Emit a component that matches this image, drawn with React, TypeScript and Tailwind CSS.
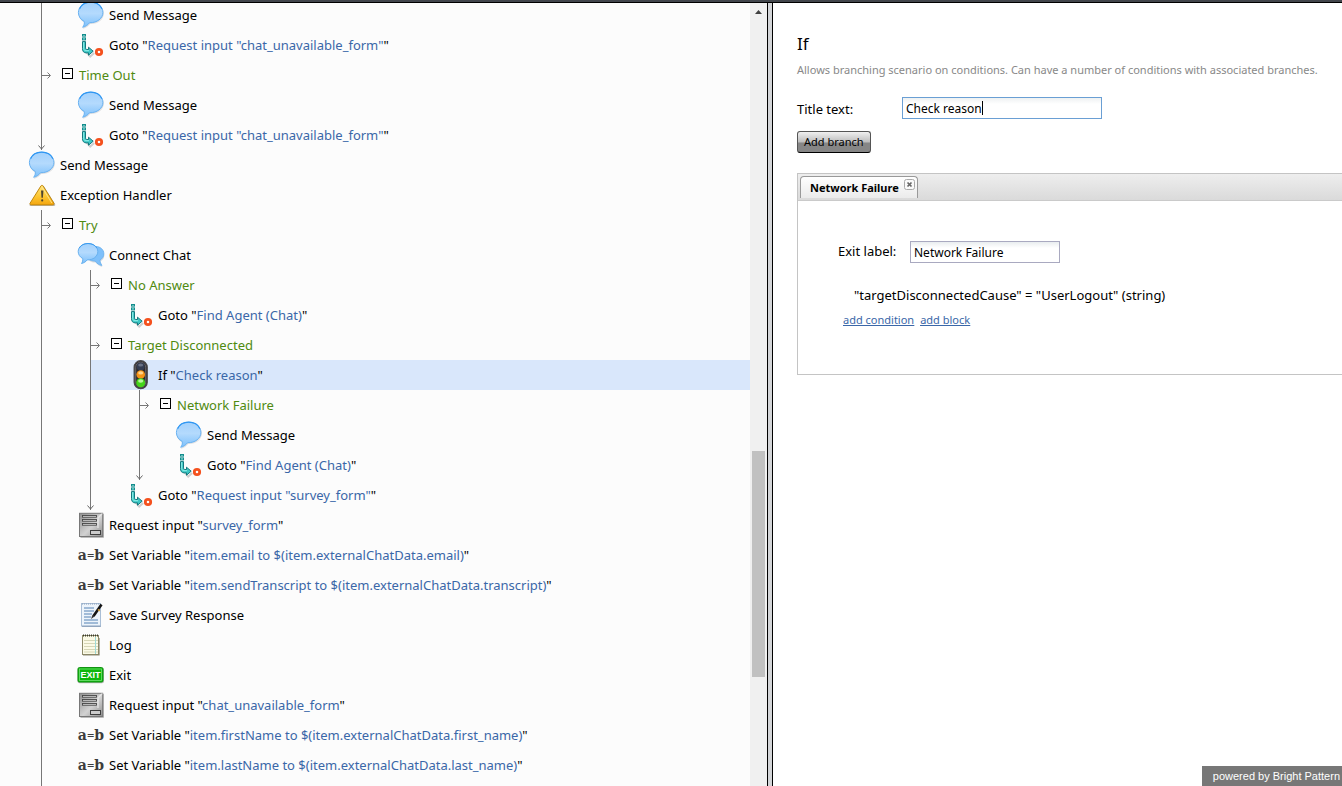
import type { ReactNode } from "react";

type IconName =
  | "message"
  | "chat"
  | "goto"
  | "warning"
  | "traffic"
  | "form"
  | "variable"
  | "survey"
  | "log"
  | "exit";

type Block = {
  icon: IconName;
  title: string;
  value?: string;
  selected?: boolean;
  children?: Entry[];
  open?: boolean;
};
type Entry = Block | { branch: string };

function Svg({ children }: { children: ReactNode }) {
  return (
    <svg width="28" height="30" viewBox="0 0 28 30" className="overflow-visible" aria-hidden="true">
      {children}
    </svg>
  );
}

function Icon({ name }: { name: IconName }) {
  switch (name) {
    case "message":
      return (
        <Svg>
          <path
            d="M14.7 2C7.6 2 2 6.6 2 12.6c0 4 2.300 7.300 5.800 9.100.6 2-.2 4.200-1.600 6.300 3.200-.9 5.600-2.600 7.400-4.900 7.600.3 13.700-4.500 13.700-10.500C27.300 6.600 21.800 2 14.700 2z"
            fill="#8a9099"
            opacity=".25"
            transform="translate(.6 1)"
          />
          <path
            d="M14.700 2.200C7.800 2.200 2.400 6.700 2.400 12.500c0 3.900 2.300 7.200 5.800 8.900.5 2-.2 4-1.500 5.900 3-.9 5.200-2.400 6.900-4.600 7.400.3 13.300-4.400 13.300-10.200 0-5.800-5.300-10.300-12.200-10.300z"
            fill="url(#bubble)"
            stroke="#68b2f2"
          />
          <path d="M3.600 8.700C5.200 4.800 9.400 2.200 14.700 2.200s9.500 2.600 11.200 6.500" fill="none" stroke="#2f97f3" strokeWidth="1.200" />
        </Svg>
      );
    case "chat":
      return (
        <Svg>
          <path d="M19.500 6.500c5 0 8.300 3.200 8.300 7.300 0 2.700-1.500 4.900-3.900 6.200.1 2 .8 3.700 2 5.400-3-.6-5.200-2-6.700-4.300-5.200 0-9-3-9-7.200 0-4.200 3.800-7.400 9.300-7.400z" transform="translate(.5 1.500)" fill="#8a9099" opacity=".3" />
          <path d="M19.500 6.500c5 0 8.300 3.200 8.300 7.300 0 2.700-1.500 4.900-3.900 6.200.1 2 .8 3.700 2 5.400-3-.6-5.200-2-6.700-4.300-5.200 0-9-3-9-7.200 0-4.200 3.800-7.400 9.300-7.400z" fill="#7fc0fa" stroke="#71b6f1" />
          <path d="M12 3.500C6.400 3.500 2.200 7 2.200 11.600c0 3 1.800 5.500 4.500 6.900.3 1.800-.2 3.500-1.200 5 2.500-.6 4.400-1.800 5.700-3.600 5.900.3 10.600-3.500 10.600-8.300 0-4.600-4.200-8.100-9.800-8.100z" fill="url(#bubble)" stroke="#66b0ef" />
          <path d="M3.200 8.200C4.800 5.200 8 3.500 12 3.500s7.300 1.700 8.900 4.700" fill="none" stroke="#3b9bef" />
        </Svg>
      );
    case "goto":
      return (
        <Svg>
          <rect x="6.500" y="4.500" width="3" height="1.600" fill="#8fe6e0" stroke="#148c8c" />
          <rect x="6.500" y="7.900" width="3" height="2" fill="#8fe6e0" stroke="#148c8c" />
          <path d="M7.200 12.500l3 9.500 4 4.500 4-3.500" fill="none" stroke="#777" strokeWidth="2" opacity=".35" />
          <path d="M6.500 11.600h3v6.300c0 1 .5 1.600 1.500 1.600h1.500v-2.300l4.700 4-4.700 4v-2.300h-2.200c-2.600 0-3.800-1.600-3.800-4.300z" fill="#3cc6c3" stroke="#13787e" />
          <path d="M7.700 12.200v6.300c0 1.500 1 2.200 2.300 2.200h3" fill="none" stroke="#93f0e9" />
          <circle cx="23" cy="22" r="2.700" fill="#fff" stroke="#f4511e" strokeWidth="2.800" />
        </Svg>
      );
    case "warning":
      return (
        <Svg>
          <path d="M15 6.500c.6-1 1.500-1 2.100 0L28 24c.6 1.200.1 2-1.100 2H4c-1.400 0-1.900-.8-1.200-2z" fill="#666" opacity=".45" />
          <path d="M13.900 6c.6-1 1.600-1 2.200 0l10.700 17c.6 1.100.1 1.900-1.100 1.900H4.300c-1.300 0-1.800-.8-1.100-1.900z" fill="url(#amber)" stroke="#c2870b" />
          <path d="M15 7.200L24.800 23" fill="none" stroke="#ffe89a" opacity=".8" />
          <path d="M14 10.500h2.400l-.5 7.200h-1.400z" fill="#4e4530" />
          <rect x="14.200" y="19.200" width="2" height="2.300" rx=".8" fill="#4e4530" />
        </Svg>
      );
    case "traffic":
      return (
        <Svg>
          <rect x="9.200" y=".7" width="13" height="28" rx="6.500" fill="#2e2b2c" stroke="#49484a" strokeWidth="1.300" />
          <rect x="10.700" y="2.200" width="10" height="25" rx="5" fill="none" stroke="#77757a" strokeWidth=".8" />
          <circle cx="15.700" cy="6.600" r="4" fill="#343d52" />
          <ellipse cx="15.700" cy="5" rx="2.500" ry="1.500" fill="#6a7285" />
          <circle cx="15.700" cy="14.500" r="4.300" fill="#f59215" />
          <ellipse cx="15.700" cy="12.900" rx="2.500" ry="1.600" fill="#ffd58b" />
          <circle cx="15.700" cy="22.700" r="4.500" fill="#43d419" />
          <ellipse cx="15.700" cy="21" rx="2.600" ry="1.700" fill="#b9f79e" />
        </Svg>
      );
    case "form":
      return (
        <Svg>
          <path d="M4.500 4h23.300v23.800H4.500z" fill="#777" opacity=".6" />
          <rect x="3.500" y="3.300" width="23.200" height="23.200" fill="url(#steel)" stroke="#777" />
          <path d="M26.500 3.300L22 8v10" fill="none" stroke="#fff" strokeWidth="1.500" opacity=".5" />
          <rect x="6.500" y="5.500" width="14" height="1.700" fill="#ddd" stroke="#454545" strokeWidth=".9" />
          <rect x="6.500" y="9.500" width="14" height="1.700" fill="#ddd" stroke="#454545" strokeWidth=".9" />
          <rect x="6.500" y="13.500" width="14" height="1.700" fill="#ddd" stroke="#454545" strokeWidth=".9" />
          <rect x="14.500" y="20.500" width="10" height="4" fill="#ccc" stroke="#3e3e3e" />
        </Svg>
      );
    case "variable":
      return (
        <span className="flex items-baseline justify-center pl-0.5 font-['DejaVu_Serif',serif] text-[14px] leading-[30px] font-bold text-[#3d3d3d]" aria-hidden="true">
          a<span className="font-['Liberation_Serif',serif] text-[13px]">=</span>b
        </span>
      );
    case "survey":
      return (
        <Svg>
          <rect x="5.500" y="3.500" width="19" height="22.500" fill="#edf4fb" stroke="#a9bed6" />
          <path d="M6 26.300h18.800" stroke="#8299b5" />
          <path d="M6 4h18" stroke="#8a9fb9" strokeDasharray="1 1" />
          <path d="M8 8h10M8 11h10M8 14h8M8 17h7M8 20h14M8 23h14" stroke="#5482b4" />
          <path d="M25.500 4.500L17.500 16" stroke="#151515" strokeWidth="2.600" />
          <path d="M22 9.500l1.800 1.300" stroke="#e0a83a" strokeWidth="1.500" />
          <path d="M16.300 14.900l2.200 1.600-3.400 2.500z" fill="#333" />
        </Svg>
      );
    case "log":
      return (
        <Svg>
          <rect x="6.500" y="5.500" width="16" height="19" fill="#fbfae6" stroke="#8d8a68" />
          <path d="M7 25.200h16.400V8" fill="none" stroke="#77745b" opacity=".6" />
          <path d="M8 10.500h14M8 13.500h14M8 16.500h14M8 19.500h14M8 22h14" stroke="#d6d6b6" />
          <path d="M19.500 7v17" stroke="#9edbd8" />
          <path d="M7 5.500h16" stroke="#3b3b2c" strokeWidth="2" strokeDasharray="1 1" />
        </Svg>
      );
    case "exit":
      return (
        <Svg>
          <rect x="1.500" y="8" width="26.500" height="15.300" rx="2" fill="#555" opacity=".4" />
          <rect x="2" y="7.500" width="25" height="14.500" rx="1.500" fill="#0cb70c" stroke="#129312" />
          <rect x="3.500" y="9" width="22" height="11.500" fill="none" stroke="#74e174" strokeWidth=".8" />
          <text x="14.500" y="18" textAnchor="middle" className="font-['Liberation_Sans',sans-serif] text-[9px] font-bold" fill="#fff">
            EXIT
          </text>
        </Svg>
      );
  }
}

const goto = (value: string): Block => ({ icon: "goto", title: "Goto", value });
const send: Block = { icon: "message", title: "Send Message" };

const unavailable: Entry[] = [
  send,
  goto('Request input "chat_unavailable_form"'),
  { branch: "Time Out" },
  send,
  goto('Request input "chat_unavailable_form"'),
];

const scenario: Entry[] = [
  send,
  {
    icon: "warning",
    title: "Exception Handler",
    open: true,
    children: [
      { branch: "Try" },
      {
        icon: "chat",
        title: "Connect Chat",
        children: [
          { branch: "No Answer" },
          goto("Find Agent (Chat)"),
          { branch: "Target Disconnected" },
          {
            icon: "traffic",
            title: "If",
            value: "Check reason",
            selected: true,
            children: [{ branch: "Network Failure" }, send, goto("Find Agent (Chat)")],
          },
          goto('Request input "survey_form"'),
        ],
      },
      { icon: "form", title: "Request input", value: "survey_form" },
      { icon: "variable", title: "Set Variable", value: "item.email to $(item.externalChatData.email)" },
      { icon: "variable", title: "Set Variable", value: "item.sendTranscript to $(item.externalChatData.transcript)" },
      { icon: "survey", title: "Save Survey Response" },
      { icon: "log", title: "Log" },
      { icon: "exit", title: "Exit" },
      { icon: "form", title: "Request input", value: "chat_unavailable_form" },
      { icon: "variable", title: "Set Variable", value: "item.firstName to $(item.externalChatData.first_name)" },
      { icon: "variable", title: "Set Variable", value: "item.lastName to $(item.externalChatData.last_name)" },
    ],
  },
];

function Children({ entries, open }: { entries: Entry[]; open?: boolean }) {
  return (
    <ul className={open ? "ml-[48px] border-l border-[#777] pb-8" : "relative ml-[48px] border-l border-[#777]"}>
      {entries.map((entry, i) => (
        <Node key={i} entry={entry} />
      ))}
      {!open && (
        <svg width="7" height="5" viewBox="0 0 7 5" className="absolute bottom-0 -left-1" aria-hidden="true">
          <path d="M.5 .5l3 3.500 3-3.500" fill="none" stroke="#666" />
        </svg>
      )}
    </ul>
  );
}

function Node({ entry }: { entry: Entry }) {
  if ("branch" in entry) {
    return (
      <li className="flex h-[30px] items-center">
        <svg width="10" height="9" viewBox="0 0 10 9" aria-hidden="true">
          <path d="M0 4.500h8M5.500 1.500l3 3-3 3" fill="none" stroke="#777" />
        </svg>
        <button type="button" aria-label={`Collapse ${entry.branch}`} className="mb-1 ml-[10px] grid size-[11px] place-items-center border border-black bg-white">
          <span className="h-px w-[5px] bg-black" />
        </button>
        <span className="ml-1.5 text-[#4f8a10]">{entry.branch}</span>
      </li>
    );
  }
  return (
    <li>
      <div className={entry.selected ? "flex h-[30px] items-center bg-[#d9e7fb] pl-[34px]" : "flex h-[30px] items-center pl-[34px]"}>
        <span className="w-[28px] shrink-0">
          <Icon name={entry.icon} />
        </span>
        <span className="ml-[5px] whitespace-nowrap">
          {entry.title}
          {entry.value && (
            <>
              {' "'}
              <span className="text-[#3a67a8]">{entry.value}</span>
              {'"'}
            </>
          )}
        </span>
      </div>
      {entry.children && <Children entries={entry.children} open={entry.open} />}
    </li>
  );
}

function Gradients() {
  return (
    <svg width="0" height="0" className="absolute" aria-hidden="true">
      <defs>
        <linearGradient id="bubble" x1="0" y1="0" x2="0" y2="1">
          <stop offset="0" stopColor="#a3d1fc" />
          <stop offset=".45" stopColor="#b4dafd" />
          <stop offset="1" stopColor="#7cc0fb" />
        </linearGradient>
        <linearGradient id="amber" x1="0" y1="0" x2="0" y2="1">
          <stop offset="0" stopColor="#ffe57c" />
          <stop offset=".6" stopColor="#fdc52f" />
          <stop offset="1" stopColor="#f3a510" />
        </linearGradient>
        <linearGradient id="steel" x1="0" y1="0" x2="1" y2="1">
          <stop offset="0" stopColor="#8f8f8f" />
          <stop offset=".55" stopColor="#d2d2d2" />
          <stop offset="1" stopColor="#8d8d8d" />
        </linearGradient>
      </defs>
    </svg>
  );
}

export default function App() {
  return (
    <div className="relative flex h-screen flex-col overflow-hidden bg-white font-['Noto_Sans',sans-serif] text-[13px] leading-5 text-black">
      <Gradients />
      <header className="h-[3px] shrink-0 border-b border-black bg-[#42464c]" />
      <div className="grid min-h-0 flex-1 grid-cols-[767fr_575fr]">
        <section className="flex min-w-0 overflow-hidden bg-[#fcfcfc]">
          <div className="min-w-0 flex-1 overflow-hidden">
            <div className="-mt-[3px] -ml-[7px]">
              <Children entries={unavailable} />
              <ul>
                {scenario.map((entry, i) => (
                  <Node key={i} entry={entry} />
                ))}
              </ul>
            </div>
          </div>
          <div className="flex w-[17px] shrink-0 flex-col items-center bg-[#f0f0f0]">
            <svg width="7" height="4" viewBox="0 0 7 4" className="mt-[7px] shrink-0" aria-hidden="true">
              <path d="M0 4L3.500 0 7 4z" fill="#404040" />
            </svg>
            <div className="flex w-full flex-1 flex-col px-0.5">
              <div className="flex-[437]" />
              <div className="flex-[226] bg-[#c1c1c1]" />
              <div className="flex-[109]" />
            </div>
          </div>
        </section>

        <section className="flex min-w-0">
          <div className="w-[6px] shrink-0 border-x border-black bg-[#d3d5d8]" />
          <div className="min-w-0 flex-1 overflow-hidden pt-[30px] pl-6">
            <h1 className="text-[17px] leading-[22px]">If</h1>
            <p className="mt-[7px] text-[11px] leading-4 whitespace-nowrap text-[#888]">
              Allows branching scenario on conditions. Can have a number of conditions with associated branches.
            </p>
            <div className="mt-[19px] flex items-center">
              <label htmlFor="title" className="w-[105px] pt-0.5">
                Title text:
              </label>
              <div className="relative">
                <input
                  id="title"
                  defaultValue="Check reason"
                  className="block h-[22px] w-[200px] border border-[#6a9fd4] bg-linear-to-b from-[#eef1f2] to-white to-30% px-[3px] text-[12px] outline-none"
                />
                <span className="absolute top-1 left-20 h-[14px] w-px bg-black" />
              </div>
            </div>
            <button
              type="button"
              className="mt-3 block h-[22px] rounded-[3px] border border-[#555] border-b-black bg-linear-to-b from-[#f0f0f0] from-0% via-[#bdbdbd] via-50% to-[#868686] to-55% px-1.5 text-[11px] leading-5 whitespace-nowrap"
            >
              Add branch
            </button>

            <div className="mt-5 -mr-1 h-[202px] border border-[#c4c4c4]">
              <div className="flex h-[27px] items-start border-b border-[#cacaca] bg-linear-to-b from-[#eeeeee] to-[#dadada] pt-0.5 pl-0.5">
                <div className="flex h-[22px] items-start gap-[5px] rounded-t-[4px] border border-b-0 border-[#999] bg-linear-to-b from-white to-[#ebebeb] pr-0.5 pl-[9px]">
                  <span className="text-[11px] leading-[21px] font-bold whitespace-nowrap">Network Failure</span>
                  <button type="button" aria-label="Close tab" className="mt-0.5">
                    <svg width="11" height="11" viewBox="0 0 11 11" aria-hidden="true">
                      <rect x=".5" y=".5" width="10" height="10" rx="2" fill="#fafafa" stroke="#aaa" />
                      <path d="M3.500 3.500l4 4M7.500 3.500l-4 4" stroke="#666" strokeWidth="1.700" />
                    </svg>
                  </button>
                </div>
              </div>
              <div className="pt-10 pl-10">
                <div className="flex items-start">
                  <label htmlFor="exit-label" className="w-[72px]">
                    Exit label:
                  </label>
                  <input
                    id="exit-label"
                    defaultValue="Network Failure"
                    className="block h-[22px] w-[150px] border border-[#a9a9c0] bg-linear-to-b from-[#e9edef] to-white to-30% px-[3px] text-[12px] outline-none"
                  />
                </div>
                <p className="mt-[22px] pl-4 whitespace-nowrap">"targetDisconnectedCause" = "UserLogout" (string)</p>
                <p className="mt-[7px] flex gap-[6px] pl-[5px] text-[11px] leading-4 text-[#3a67a8] underline">
                  <a href="#condition">add condition</a>
                  <a href="#block">add block</a>
                </p>
              </div>
            </div>
          </div>
        </section>
      </div>
      <footer className="absolute right-0 bottom-0 bg-[#777] py-0.5 pr-0.5 pl-[11px] font-['Liberation_Sans',sans-serif] text-[11px] leading-4 text-white">
        powered by Bright Pattern
      </footer>
    </div>
  );
}
